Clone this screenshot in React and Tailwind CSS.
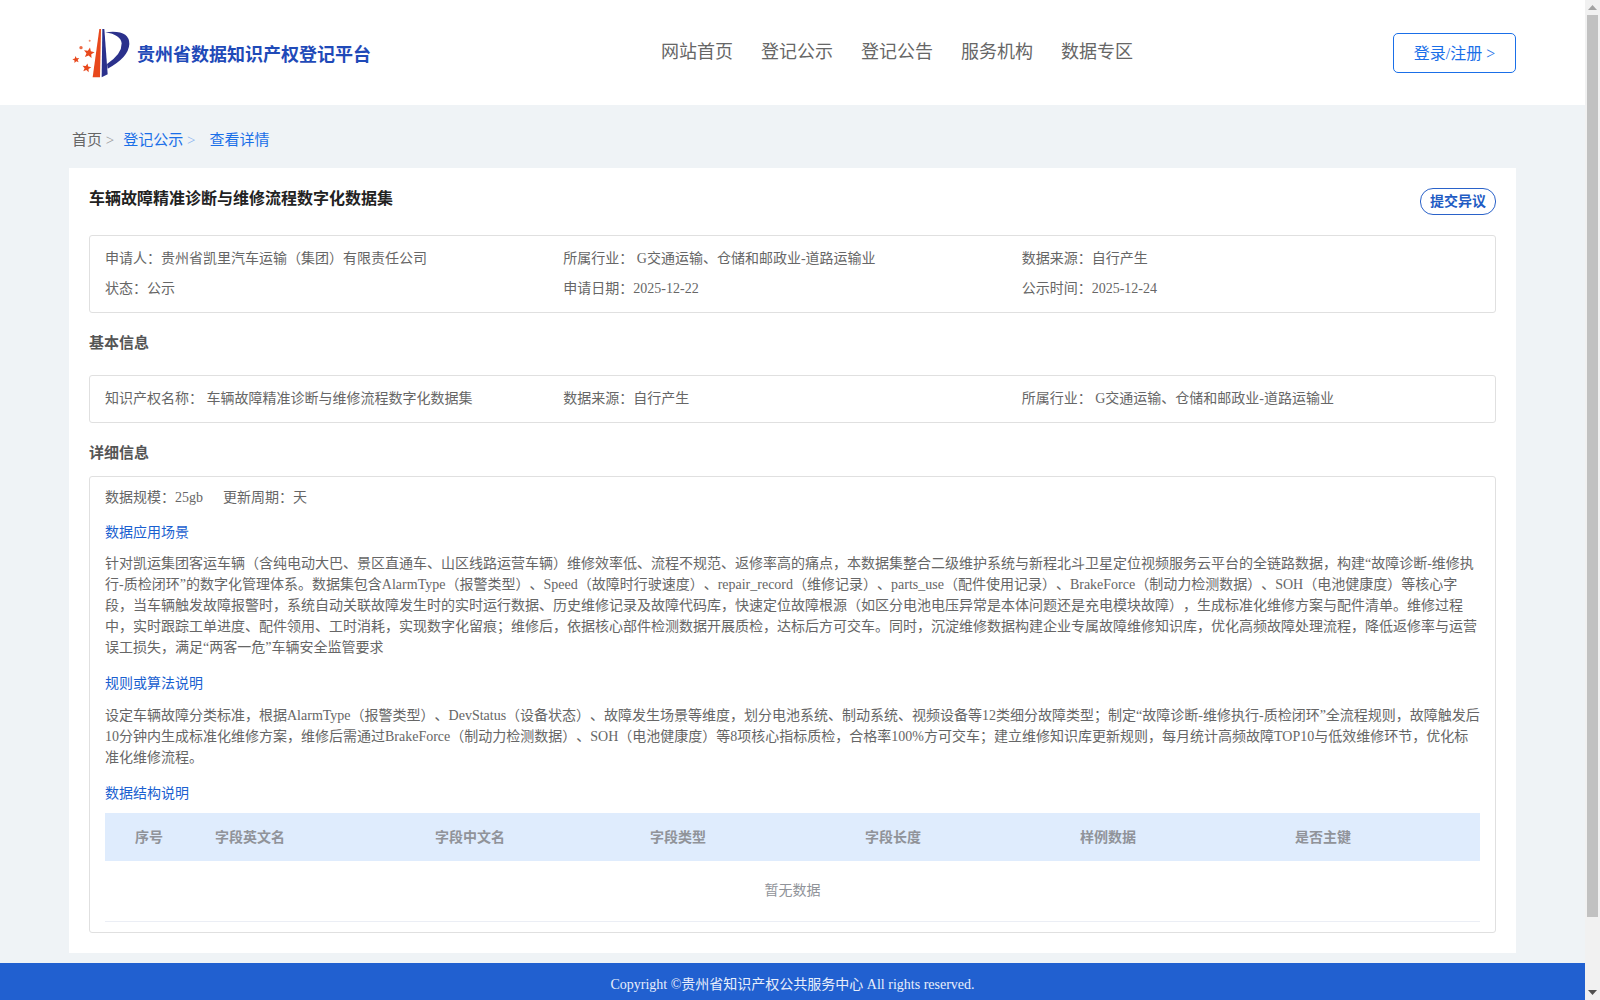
const navItems = ['网站首页', '登记公示', '登记公告', '服务机构', '数据专区'];

const columns = ['序号', '字段英文名', '字段中文名', '字段类型', '字段长度', '样例数据', '是否主键'];

// five-pointed star as polygon points
const star = (cx, cy, r, tilt = 0) =>
  Array.from({ length: 10 }, (_, i) => {
    const a = ((i * 36 - 90 + tilt) * Math.PI) / 180;
    const d = i % 2 ? r * 0.45 : r;
    return `${(cx + d * Math.cos(a)).toFixed(1)},${(cy + d * Math.sin(a)).toFixed(1)}`;
  }).join(' ');

function Logo() {
  return (
    <svg width="70" height="65" viewBox="0 0 210 195" className="shrink-0">
      <polygon points="88,27 93,27 90,172 68,172" fill="#e8481c" />
      <polygon points="97,27 103,27 113,163 95,172" fill="#2b318c" />
      <path d="M106 37 Q178 28 178 72 Q176 112 113 146 L111 132 Q156 102 155 70 Q152 44 106 37 Z" fill="#2b318c" />
      <polygon points={star(57, 99, 17, 10)} fill="#e8481c" />
      <polygon points={star(18, 119, 11, -10)} fill="#e8481c" />
      <polygon points={star(50, 144, 14, 10)} fill="#e8481c" />
      <circle cx="33" cy="83" r="5" fill="#ea6a45" />
      <circle cx="59" cy="62" r="3" fill="#f08a6c" />
    </svg>
  );
}

function Header() {
  return (
    <header className="h-[105px] bg-white flex items-center pl-[70px] pr-[69px] relative">
      <div className="w-[520px] flex items-center">
        <Logo />
        <span className="ml-[-3px] mt-[6px] text-[18px] font-bold text-[#1f4ab8]">贵州省数据知识产权登记平台</span>
      </div>
      <nav className="ml-[71px] flex gap-[28px] text-[18px] leading-[24px] text-[#666] mt-[-2px]">
        {navItems.map((item) => (
          <a key={item}>{item}</a>
        ))}
      </nav>
      <button className="ml-auto w-[123px] h-[40px] pt-[1px] border border-[#1a6fe8] rounded-[5px] text-[16px] text-[#1a6fe8]">
        登录/注册 &gt;
      </button>
    </header>
  );
}

function Field({ children }) {
  return <div className="text-[14px] text-[#666]">{children}</div>;
}

function SectionTitle({ children }) {
  return <h3 className="text-[15px] leading-[22px] font-bold text-[#555]">{children}</h3>;
}

function BlueTitle({ children, className }) {
  return <div className={`text-[14px] leading-[21px] text-[#1a5fd0] ${className}`}>{children}</div>;
}

function FieldTable() {
  return (
    <table className="w-full table-fixed mt-[9px]">
      <colgroup>
        <col className="w-[110px]" />
        <col className="w-[220px]" />
        <col className="w-[215px]" />
        <col className="w-[215px]" />
        <col className="w-[215px]" />
        <col className="w-[215px]" />
        <col />
      </colgroup>
      <thead>
        <tr className="h-[48px] bg-[#dfecfd]">
          {columns.map((col, i) => (
            <th
              key={col}
              className={`text-[14px] font-bold text-[#909399] text-left ${i === 0 ? 'pl-[30px]' : ''}`}
            >
              {col}
            </th>
          ))}
        </tr>
      </thead>
      <tbody>
        <tr className="h-[60px] border-b border-[#ebeef5]">
          <td colSpan={7} className="text-center text-[14px] text-[#909399]">暂无数据</td>
        </tr>
      </tbody>
    </table>
  );
}

function Scrollbar() {
  return (
    <aside className="w-[15px] shrink-0 bg-[#f1f1f1] flex flex-col">
      <div className="h-[15px] flex items-center justify-center">
        <svg width="9" height="6" viewBox="0 0 9 6"><polygon points="4.5,0 9,5 0,5" fill="#a3a3a3" /></svg>
      </div>
      <div className="ml-[2px] w-[11px] h-[902px] bg-[#c1c1c1]" />
      <div className="mt-auto h-[15px] flex items-center justify-center">
        <svg width="9" height="6" viewBox="0 0 9 6"><polygon points="0,0 9,0 4.5,5" fill="#505050" /></svg>
      </div>
    </aside>
  );
}

export default function App() {
  return (
    <div className="h-screen overflow-hidden flex bg-[#eff3f6] font-['Liberation_Serif','Noto_Sans_CJK_SC',serif] leading-[21px] [text-spacing-trim:space-all]">
      <div className="flex-1 min-w-0">
        <Header />

        <main className="px-[69px] pb-[10px]">
          {/* Breadcrumb */}
          <div className="pt-[25px] pb-[17px] pl-[3px] text-[15px] flex">
            <span className="text-[#666]">首页 <span className="text-[#999]">&gt;</span></span>
            <span className="ml-[9px] text-[#1a6fe8]">登记公示 <span className="text-[#8ab4f0]">&gt;</span></span>
            <span className="ml-[14px] text-[#1a6fe8]">查看详情</span>
          </div>

          <section className="bg-white px-[20px] pt-[20px] pb-[20px]">
            <div className="flex justify-between items-start">
              <h2 className="text-[16px] leading-[22px] font-bold text-[#222]">车辆故障精准诊断与维修流程数字化数据集</h2>
              <button className="w-[76px] h-[27px] border border-[#2a62c9] rounded-[13px] text-[14px] font-bold text-[#1f5cc4]">
                提交异议
              </button>
            </div>

            <div className="mt-[20px] border border-[#e0e0e0] rounded-[3px] px-[15px] pt-[8px] pb-[8px] grid grid-cols-3 leading-[30px]">
              <Field>申请人：贵州省凯里汽车运输（集团）有限责任公司</Field>
              <Field>所属行业： G交通运输、仓储和邮政业-道路运输业</Field>
              <Field>数据来源：自行产生</Field>
              <Field>状态：公示</Field>
              <Field>申请日期：2025-12-22</Field>
              <Field>公示时间：2025-12-24</Field>
            </div>

            <div className="mt-[19px]"><SectionTitle>基本信息</SectionTitle></div>

            <div className="mt-[21px] h-[48px] border border-[#e0e0e0] rounded-[3px] px-[15px] pb-[2px] grid grid-cols-3 items-center">
              <Field>知识产权名称： 车辆故障精准诊断与维修流程数字化数据集</Field>
              <Field>数据来源：自行产生</Field>
              <Field>所属行业： G交通运输、仓储和邮政业-道路运输业</Field>
            </div>

            <div className="mt-[19px]"><SectionTitle>详细信息</SectionTitle></div>

            <div className="mt-[12px] border border-[#e0e0e0] rounded-[3px] px-[15px] pt-[10px] pb-[10px]">
              <div className="flex gap-[20px] text-[14px] text-[#666]">
                <span>数据规模：25gb</span>
                <span>更新周期：天</span>
              </div>

              <BlueTitle className="mt-[14px]">数据应用场景</BlueTitle>
              <p className="mt-[10px] text-[14px] text-[#666]">
                针对凯运集团客运车辆（含纯电动大巴、景区直通车、山区线路运营车辆）维修效率低、流程不规范、返修率高的痛点，本数据集整合二级维护系统与新程北斗卫星定位视频服务云平台的全链路数据，构建“故障诊断-维修执行-质检闭环”的数字化管理体系。数据集包含AlarmType（报警类型）、Speed（故障时行驶速度）、repair_record（维修记录）、parts_use（配件使用记录）、BrakeForce（制动力检测数据）、SOH（电池健康度）等核心字段，当车辆触发故障报警时，系统自动关联故障发生时的实时运行数据、历史维修记录及故障代码库，快速定位故障根源（如区分电池电压异常是本体问题还是充电模块故障），生成标准化维修方案与配件清单。维修过程中，实时跟踪工单进度、配件领用、工时消耗，实现数字化留痕；维修后，依据核心部件检测数据开展质检，达标后方可交车。同时，沉淀维修数据构建企业专属故障维修知识库，优化高频故障处理流程，降低返修率与运营误工损失，满足“两客一危”车辆安全监管要求
              </p>

              <BlueTitle className="mt-[15px]">规则或算法说明</BlueTitle>
              <p className="mt-[11px] text-[14px] text-[#666]">
                设定车辆故障分类标准，根据AlarmType（报警类型）、DevStatus（设备状态）、故障发生场景等维度，划分电池系统、制动系统、视频设备等12类细分故障类型；制定“故障诊断-维修执行-质检闭环”全流程规则，故障触发后10分钟内生成标准化维修方案，维修后需通过BrakeForce（制动力检测数据）、SOH（电池健康度）等8项核心指标质检，合格率100%方可交车；建立维修知识库更新规则，每月统计高频故障TOP10与低效维修环节，优化标准化维修流程。
              </p>

              <BlueTitle className="mt-[15px]">数据结构说明</BlueTitle>
              <FieldTable />
            </div>
          </section>
        </main>

        <footer className="h-[100px] bg-[#2160d0] pt-[11px] text-center text-[14px] text-[#e8eefb]">
          Copyright ©贵州省知识产权公共服务中心 All rights reserved.
        </footer>
      </div>

      <Scrollbar />
    </div>
  );
}
